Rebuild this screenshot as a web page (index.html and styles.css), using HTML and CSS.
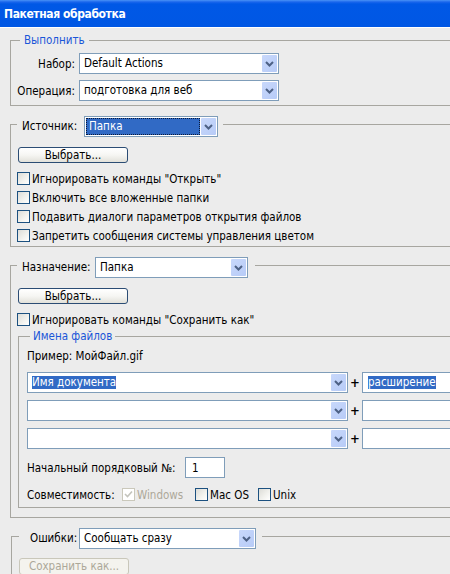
FILE: index.html
```html
<!DOCTYPE html>
<html lang="ru">
<head>
<meta charset="utf-8">
<title>Пакетная обработка</title>
<link rel="stylesheet" href="styles.css">
</head>
<body>
<div class="titlebar">Пакетная обработка</div>

<fieldset class="group g-play">
  <legend class="legend-text">Выполнить</legend>
  <div class="form-grid">
    <span class="lbl">Набор:</span>
    <div class="select w-set"><span class="sel-text">Default Actions</span><span class="arrow"><svg width="9" height="6" viewBox="0 0 9 6"><path d="M1 1 L4.5 4.5 L8 1" fill="none" stroke="#4d6185" stroke-width="2"/></svg></span></div>
    <span class="lbl">Операция:</span>
    <div class="select w-set"><span class="sel-text">подготовка для веб</span><span class="arrow"><svg width="9" height="6" viewBox="0 0 9 6"><path d="M1 1 L4.5 4.5 L8 1" fill="none" stroke="#4d6185" stroke-width="2"/></svg></span></div>
  </div>
</fieldset>

<fieldset class="group g-src">
  <legend class="legend-ctl lg-src">
    <div class="legend-row">
      <span class="lbl-head w-src">Источник:</span>
      <div class="select sel-src focused"><span class="sel-text"><span class="focus-box">Папка</span></span><span class="arrow"><svg width="9" height="6" viewBox="0 0 9 6"><path d="M1 1 L4.5 4.5 L8 1" fill="none" stroke="#4d6185" stroke-width="2"/></svg></span></div>
    </div>
  </legend>
  <div class="btn">Выбрать...</div>
  <div class="checks">
    <div class="check-row"><span class="cb"></span><span>Игнорировать команды "Открыть"</span></div>
    <div class="check-row"><span class="cb"></span><span>Включить все вложенные папки</span></div>
    <div class="check-row"><span class="cb"></span><span>Подавить диалоги параметров открытия файлов</span></div>
    <div class="check-row"><span class="cb"></span><span>Запретить сообщения системы управления цветом</span></div>
  </div>
</fieldset>

<fieldset class="group g-dst">
  <legend class="legend-ctl lg-dst">
    <div class="legend-row">
      <span class="lbl-head w-dst">Назначение:</span>
      <div class="select sel-dst"><span class="sel-text">Папка</span><span class="arrow"><svg width="9" height="6" viewBox="0 0 9 6"><path d="M1 1 L4.5 4.5 L8 1" fill="none" stroke="#4d6185" stroke-width="2"/></svg></span></div>
    </div>
  </legend>
  <div class="btn">Выбрать...</div>
  <div class="checks">
    <div class="check-row"><span class="cb"></span><span>Игнорировать команды "Сохранить как"</span></div>
  </div>

  <fieldset class="group g-names">
    <legend class="legend-text lg-names">Имена файлов</legend>
    <div class="example">Пример: МойФайл.gif</div>
    <div class="name-rows">
      <div class="name-row">
        <div class="select sel-name"><span class="sel-text"><span class="hl">Имя документа</span></span><span class="arrow"><svg width="9" height="6" viewBox="0 0 9 6"><path d="M1 1 L4.5 4.5 L8 1" fill="none" stroke="#4d6185" stroke-width="2"/></svg></span></div>
        <span class="plus">+</span>
        <div class="textbox tb-ext"><span class="hl">расширение</span></div>
      </div>
      <div class="name-row">
        <div class="select sel-name"><span class="sel-text"></span><span class="arrow"><svg width="9" height="6" viewBox="0 0 9 6"><path d="M1 1 L4.5 4.5 L8 1" fill="none" stroke="#4d6185" stroke-width="2"/></svg></span></div>
        <span class="plus">+</span>
        <div class="textbox tb-ext"></div>
      </div>
      <div class="name-row">
        <div class="select sel-name"><span class="sel-text"></span><span class="arrow"><svg width="9" height="6" viewBox="0 0 9 6"><path d="M1 1 L4.5 4.5 L8 1" fill="none" stroke="#4d6185" stroke-width="2"/></svg></span></div>
        <span class="plus">+</span>
        <div class="textbox tb-ext"></div>
      </div>
    </div>
    <div class="serial-row">
      <span class="serial-lbl">Начальный порядковый №:</span>
      <div class="textbox tb-serial">1</div>
    </div>
    <div class="compat-row">
      <span class="compat-lbl">Совместимость:</span>
      <span class="compat-item ci-win"><span class="cb disabled"><svg width="11" height="11" viewBox="0 0 11 11"><path d="M2 5 L4.5 7.5 L9 2.5" fill="none" stroke="#c4c4bd" stroke-width="1.6"/></svg></span><span class="dis-text">Windows</span></span>
      <span class="compat-item ci-mac"><span class="cb"></span><span>Mac OS</span></span>
      <span class="compat-item"><span class="cb"></span><span>Unix</span></span>
    </div>
  </fieldset>
</fieldset>

<fieldset class="group g-err">
  <legend class="legend-ctl lg-err">
    <div class="legend-row">
      <span class="lbl-head w-err">Ошибки:</span>
      <div class="select sel-err"><span class="sel-text">Сообщать сразу</span><span class="arrow"><svg width="9" height="6" viewBox="0 0 9 6"><path d="M1 1 L4.5 4.5 L8 1" fill="none" stroke="#4d6185" stroke-width="2"/></svg></span></div>
    </div>
  </legend>
  <div class="btn btn-disabled">Сохранить как...</div>
</fieldset>
</body>
</html>
```

FILE: styles.css
```css
html, body {
  margin: 0;
  padding: 0;
}
body {
  width: 450px;
  height: 574px;
  overflow: hidden;
  background: #ececec;
  font-family: "DejaVu Sans Condensed", "DejaVu Sans", sans-serif;
  font-stretch: condensed;
  font-size: 11.5px;
  color: #000;
}

.titlebar {
  height: 27px;
  border-bottom: 1px solid #fff;
  background: linear-gradient(#4a93f6 0, #1a66ec 2px, #0058e6 4px, #0057e4 100%);
  color: #fff;
  font-weight: bold;
  font-size: 12px;
  letter-spacing: -0.4px;
  line-height: 29px;
  padding-left: 4px;
}

/* group boxes */
.group {
  margin: 10px 0 0 10px;
  border: 1px solid #a7a6a0;
  border-right: none;
  min-width: 0;
  padding: 0;
}
.legend-text {
  color: #1a56d8;
  line-height: 14px;
  height: 14px;
  padding: 0 4px;
  margin-left: 5px;
}
.legend-ctl {
  padding: 0;
}
.legend-row {
  display: flex;
  align-items: flex-start;
  height: 16px;
}
.lbl-head {
  line-height: 21px;
  flex: none;
}

.g-play {
  margin-top: 5px;
  padding: 6px 0 4px 4px;
}
.form-grid {
  display: grid;
  grid-template-columns: 60px 200px;
  column-gap: 4px;
  row-gap: 6px;
  align-items: center;
}
.lbl {
  text-align: right;
}

.g-src {
  padding: 15px 0 1px 7px;
}
.lg-src { margin-left: -1px; padding: 0 5px 0 5px; }
.w-src { width: 62px; }
.sel-src { width: 134px; }

.g-dst {
  padding: 15px 0 9px 7px;
}
.lg-dst { margin-left: -1px; padding: 0 7px 0 5px; }
.w-dst { width: 73px; }
.sel-dst { width: 153px; }

.g-err {
  margin-left: 11px;
  padding: 14px 0 0 7px;
}
.lg-err { padding: 0 6px 0 11px; }
.w-err { width: 49px; }
.sel-err { width: 177px; }

/* select */
.select {
  box-sizing: border-box;
  height: 21px;
  border: 1px solid #7f9db9;
  background: #fff;
  display: flex;
  align-items: stretch;
  padding: 1px;
  flex: none;
}
.legend-row .select {
  margin-bottom: -5px;
}
.w-set { width: 200px; }
.sel-text {
  flex: 1;
  min-width: 0;
  padding-left: 3px;
  line-height: 17px;
  white-space: nowrap;
  overflow: hidden;
  display: flex;
}
.arrow {
  flex: none;
  width: 15px;
  background: linear-gradient(135deg, #c8d8fb, #b7cbf7);
  display: flex;
  align-items: center;
  justify-content: center;
  border-radius: 1px;
}
.arrow svg { display: block; margin-top: 1px; }

.focused .sel-text {
  padding-left: 0;
  padding-right: 1px;
}
.focus-box {
  flex: 1;
  background: #316ac5;
  color: #fff;
  border: 1px dotted #0b1a38;
  line-height: 15px;
  padding-left: 2px;
}

.hl {
  background: #316ac5;
  color: #fff;
  line-height: 13px;
  align-self: center;
}

/* buttons */
.btn {
  box-sizing: border-box;
  width: 110px;
  height: 16px;
  border: 1px solid #2b4c74;
  border-radius: 3px;
  background: linear-gradient(#ffffff 0, #f6f6f3 50%, #e2e1da 100%);
  text-align: center;
  line-height: 14px;
}
.btn-disabled {
  border-color: #c9c7ba;
  color: #aca899;
  background: #f4f3ee;
  height: 17px;
}

/* checkboxes */
.checks {
  margin-top: 6px;
}
.check-row {
  height: 19px;
  display: flex;
  align-items: center;
  margin-left: -1px;
  white-space: nowrap;
}
.cb {
  box-sizing: border-box;
  width: 13px;
  height: 13px;
  border: 1px solid #1c5180;
  background: linear-gradient(135deg, #dcdcd7 0, #f3f3ef 60%, #ffffff 100%);
  margin-right: 2px;
  flex: none;
  display: inline-flex;
  align-items: center;
  justify-content: center;
}
.cb.disabled {
  border-color: #cac8bb;
  background: #fff;
}
.cb svg { display: block; }
.dis-text { color: #aca899; }

/* file names */
.g-names {
  margin: 0;
  padding: 6px 0 3px 8px;
}
.lg-names {
  margin-left: 3px;
  padding: 0 3px;
}
.example {
  line-height: 14px;
  height: 14px;
}
.name-rows {
  margin-top: 9px;
  display: flex;
  flex-direction: column;
  gap: 7px;
}
.name-row {
  display: flex;
  align-items: center;
  height: 21px;
}
.sel-name { width: 321px; }
.plus {
  width: 14px;
  text-align: center;
  font-size: 13px;
  font-weight: bold;
  flex: none;
}
.textbox {
  box-sizing: border-box;
  height: 21px;
  border: 1px solid #7f9db9;
  background: #fff;
  flex: none;
  display: flex;
  align-items: center;
  padding-left: 5px;
  white-space: nowrap;
}
.tb-ext { width: 110px; }
.serial-row {
  margin-top: 8px;
  display: flex;
  align-items: center;
  height: 21px;
}
.serial-lbl { width: 158px; flex: none; }
.tb-serial { width: 40px; padding-left: 6px; }

.compat-row {
  margin-top: 7px;
  height: 19px;
  display: flex;
  align-items: center;
  white-space: nowrap;
}
.compat-lbl { width: 95px; flex: none; }
.compat-item {
  display: flex;
  align-items: center;
  flex: none;
}
.compat-item .cb { margin-right: 2px; }
.ci-win { width: 73px; }
.ci-mac { width: 63px; }
```
